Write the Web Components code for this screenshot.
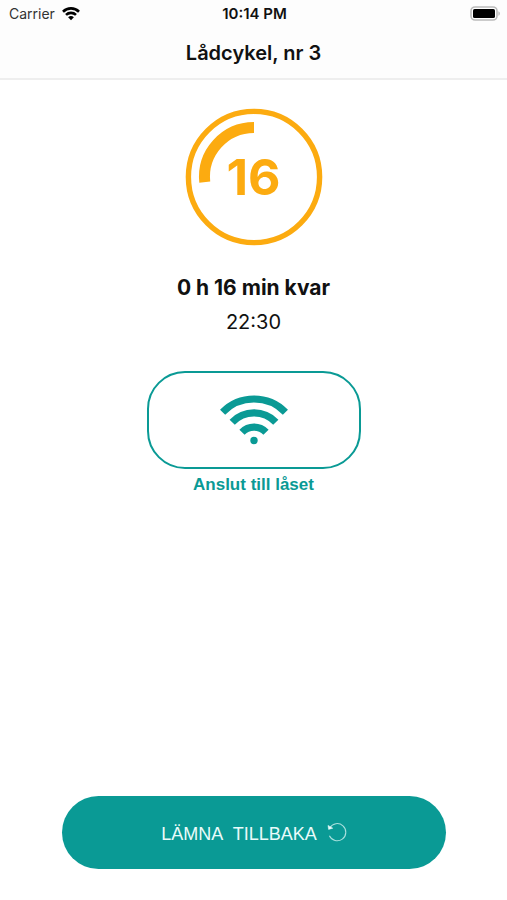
<!DOCTYPE html>
<html lang="sv">
<head>
<meta charset="utf-8">
<meta name="viewport" content="width=device-width, initial-scale=1">
<title>Lådcykel, nr 3</title>
<style>
  body {
    margin: 0;
    background: #fff;
    color: #111;
    font-family: Inter, "Liberation Sans", sans-serif;
  }
</style>
</head>
<body>
<booking-screen>
  <status-bar slot="top" carrier="Carrier" time="10:14 PM"></status-bar>
  <page-header slot="top">Lådcykel, nr 3</page-header>
  <time-ring minutes="16" total="60"></time-ring>
  <time-left until="22:30">0 h 16 min kvar</time-left>
  <lock-button>Anslut till låset</lock-button>
  <return-button slot="bottom">LÄMNA&nbsp; TILLBAKA</return-button>
</booking-screen>

<script>
class BookingScreen extends HTMLElement {
  constructor() {
    super();
    this.attachShadow({ mode: 'open' }).innerHTML = `
      <style>
        :host { display: flex; flex-direction: column; min-height: 100vh; }
        header { background: #fdfdfd; border-bottom: 2px solid #eee; }
        main {
          flex: 1;
          display: flex;
          flex-direction: column;
          align-items: center;
          padding-top: 28px;
        }
        footer { padding: 24px 61px 31px 62px; }
      </style>
      <header><slot name="top"></slot></header>
      <main><slot></slot></main>
      <footer><slot name="bottom"></slot></footer>
    `;
  }
}

class StatusBar extends HTMLElement {
  constructor() {
    super();
    this.attachShadow({ mode: 'open' });
  }

  connectedCallback() {
    this.shadowRoot.innerHTML = `
      <style>
        :host {
          display: grid;
          grid-template-columns: 1fr auto 1fr;
          align-items: center;
          height: 28px;
          padding: 0 7px 0 9px;
          font-size: 14px;
          line-height: 20px;
        }
        .carrier { display: flex; align-items: center; gap: 7px; color: #333; }
        .time { font-size: 15px; font-weight: 600; }
        .battery { justify-self: end; }
        svg { display: block; }
      </style>
      <span class="carrier">
        ${this.getAttribute('carrier')}
        <svg width="18" height="14" viewBox="0 0 18 14" fill="none" stroke="#000" stroke-width="2.6">
          <path d="M1 4.7A11.4 11.4 0 0 1 17 4.7"/>
          <path d="M4 7.9A7.2 7.2 0 0 1 14 7.9"/>
          <path d="M9 13.2L6.1 10.3A4.2 4.2 0 0 1 11.9 10.3Z" fill="#000" stroke="none"/>
        </svg>
      </span>
      <span class="time">${this.getAttribute('time')}</span>
      <svg class="battery" width="30" height="16" viewBox="0 0 30 16">
        <rect x="1" y="1" width="26" height="13" rx="4" fill="#fff" stroke="#bbb" stroke-width="1.6"/>
        <rect x="3" y="3" width="22" height="9" rx="1.6" fill="#000"/>
        <path d="M28.4 5.2C30.4 6 30.4 9 28.4 9.8Z" fill="#bbb"/>
      </svg>
    `;
  }
}

class PageHeader extends HTMLElement {
  constructor() {
    super();
    this.attachShadow({ mode: 'open' }).innerHTML = `
      <style>
        :host { display: block; padding: 11px 0; text-align: center; }
        h1 { margin: 0; font-size: 20px; font-weight: 600; line-height: 28px; }
      </style>
      <h1><slot></slot></h1>
    `;
  }
}

class TimeRing extends HTMLElement {
  constructor() {
    super();
    this.attachShadow({ mode: 'open' });
  }

  connectedCallback() {
    const minutes = Number(this.getAttribute('minutes'));
    const total = Number(this.getAttribute('total'));
    // The arc runs counter-clockwise from twelve o'clock
    const angle = (minutes / total) * 2 * Math.PI;
    const r = 49.5;
    const x = 69 - r * Math.sin(angle);
    const y = 69 - r * Math.cos(angle);

    this.shadowRoot.innerHTML = `
      <style>
        :host { display: grid; place-items: center; color: #fcab10; }
        svg, span { grid-area: 1 / 1; }
        svg { display: block; }
        span { font-size: 50px; font-weight: 700; line-height: 56px; }
      </style>
      <svg width="138" height="138" viewBox="0 0 138 138" fill="none" stroke="currentColor">
        <circle cx="69" cy="69" r="65.6" stroke-width="5.4"/>
        <path d="M69 ${69 - r}A${r} ${r} 0 0 0 ${x} ${y}" stroke-width="11"/>
      </svg>
      <span>${minutes}</span>
    `;
  }
}

class TimeLeft extends HTMLElement {
  constructor() {
    super();
    this.attachShadow({ mode: 'open' });
  }

  connectedCallback() {
    this.shadowRoot.innerHTML = `
      <style>
        :host { display: block; margin-top: 24px; text-align: center; }
        p { margin: 0; font-size: 20px; line-height: 35px; }
        .left { font-size: 21px; font-weight: 700; }
      </style>
      <p class="left"><slot></slot></p>
      <p>${this.getAttribute('until')}</p>
    `;
  }
}

class LockButton extends HTMLElement {
  constructor() {
    super();
    this.attachShadow({ mode: 'open' }).innerHTML = `
      <style>
        :host {
          display: flex;
          flex-direction: column;
          align-items: center;
          gap: 6px;
          margin-top: 31px;
          color: #0a9a95;
          font-family: "Liberation Sans", Arial, sans-serif;
        }
        button {
          display: grid;
          place-items: center;
          width: 214px;
          height: 98px;
          padding: 0;
          border: 2px solid currentColor;
          border-radius: 38px;
          background: #fff;
          color: inherit;
          cursor: pointer;
        }
        label { font-size: 17px; font-weight: 700; line-height: 20px; }
      </style>
      <button id="lock">
        <svg width="70" height="50" viewBox="0 0 70 50" fill="none" stroke="currentColor" stroke-width="7.2">
          <path d="M3.6 17.2A44 44 0 0 1 66.4 17.2"/>
          <path d="M13.2 27.2A30 30 0 0 1 56.8 27.2"/>
          <path d="M23 37.2A16.6 16.6 0 0 1 47 37.2"/>
          <circle cx="35" cy="45.5" r="3.7" fill="currentColor" stroke="none"/>
        </svg>
      </button>
      <label for="lock"><slot></slot></label>
    `;
  }
}

class ReturnButton extends HTMLElement {
  constructor() {
    super();
    this.attachShadow({ mode: 'open' }).innerHTML = `
      <style>
        :host { display: block; }
        button {
          display: flex;
          align-items: center;
          justify-content: center;
          gap: 10px;
          width: 100%;
          height: 73px;
          padding: 3px 0 0;
          border: 0;
          border-radius: 37px;
          background: #0a9a95;
          color: #e9fbfa;
          font: 18px/24px "Liberation Sans", Arial, sans-serif;
          cursor: pointer;
        }
        svg { display: block; }
      </style>
      <button>
        <span><slot></slot></span>
        <svg width="20" height="24" viewBox="0 0 20 24" fill="none" stroke="#a9e0dd" stroke-width="1.1">
          <path d="M2.8 5.8A8.6 8.6 0 1 1 2.4 13.8"/>
          <path d="M1 3.4L1.6 7.4L5.8 6.2Z" fill="#e9fbfa" stroke="#e9fbfa" stroke-width="0.5"/>
        </svg>
      </button>
    `;
  }
}

customElements.define('booking-screen', BookingScreen);
customElements.define('status-bar', StatusBar);
customElements.define('page-header', PageHeader);
customElements.define('time-ring', TimeRing);
customElements.define('time-left', TimeLeft);
customElements.define('lock-button', LockButton);
customElements.define('return-button', ReturnButton);
</script>
</body>
</html>
